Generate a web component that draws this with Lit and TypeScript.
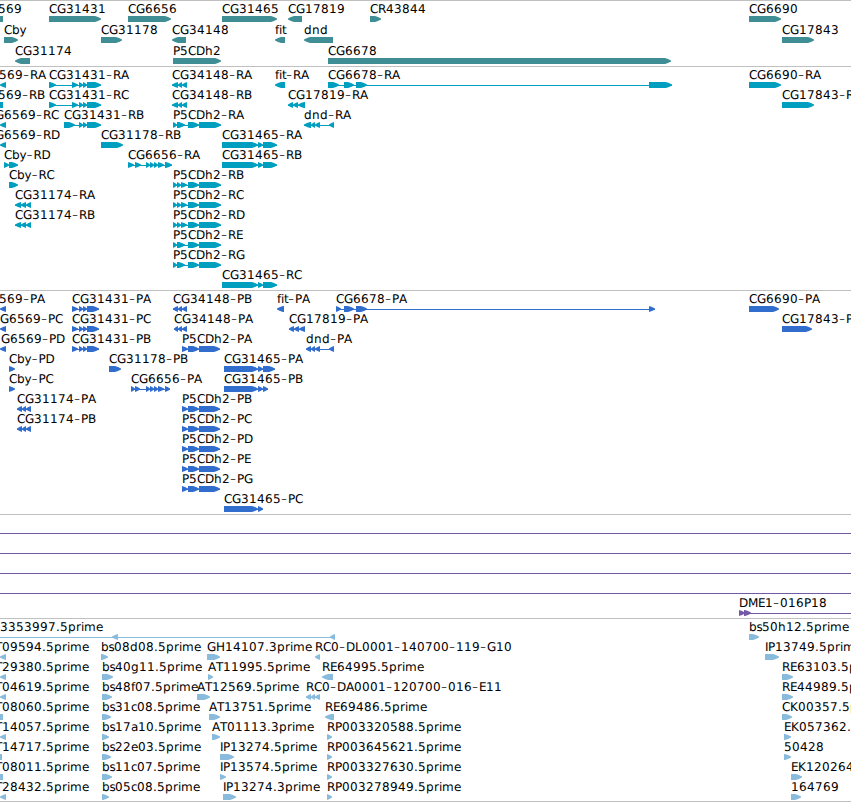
import { html, css, LitElement, svg } from 'lit';
import { customElement, property } from 'lit/decorators.js';

type Span = [number, number];

interface Feature {
  x: number;
  label: string;
  parts: Span[];
  reverse?: boolean;
  // start and end of the connecting line, when it is not given by the parts
  line?: Span;
}

interface Track {
  name: string;
  color: string;
  lineHeight: number;
  rows: Feature[][];
}

const fwd = (x: number, label: string, ...parts: Span[]): Feature => ({ x, label, parts });
const rev = (x: number, label: string, ...parts: Span[]): Feature => ({
  x,
  label,
  parts,
  reverse: true,
});

// advance of each character in px, anything missing is 8 wide
const ADVANCE: { [c: string]: number } = {
  G: 9, D: 9, H: 9, M: 10, B: 7, E: 7, P: 7, L: 7, T: 7, I: 3,
  a: 7, e: 7, g: 8, y: 7, i: 3, r: 5, s: 5.5, m: 12, f: 4, t: 4, c: 6, b: 7.5,
  '.': 4, '-': 7,
};

const p5cdh2Long: Span[] = [[173, 177], [177, 181], [181, 187], [188, 199], [199, 221]];
const p5cdh2Short: Span[] = [[173, 177], [177, 185], [188, 199], [199, 221]];
const p5cdh2Cds: Span[] = [[182, 188], [188, 199], [199, 220]];
const cg31465: Span[] = [[222, 258], [258, 263], [263, 277]];
const cg31431: Span[] = [[49, 56], [72, 78], [79, 83], [83, 87], [87, 101]];
const cg31431Cds: Span[] = [[72, 78], [79, 83], [83, 87], [87, 99]];
const clipped: Span = [0, 6];
const wholeLine = (): Feature => ({ x: 0, label: '', parts: [], line: [0, 851] });

const TRACKS: Track[] = [
  {
    name: 'genes',
    color: '#3f8e95',
    lineHeight: 21,
    rows: [
      [
        rev(-2, '569', [-8, 3]),
        fwd(49, 'CG31431', [49, 101]),
        fwd(128, 'CG6656', [128, 171]),
        fwd(222, 'CG31465', [222, 277]),
        rev(288, 'CG17819', [288, 302]),
        fwd(370, 'CR43844', [370, 381]),
        fwd(749, 'CG6690', [749, 781]),
      ],
      [
        fwd(4, 'Cby', [4, 18]),
        fwd(101, 'CG31178', [101, 122]),
        rev(172, 'CG34148', [172, 186]),
        rev(275, 'fit', [275, 285]),
        rev(304, 'dnd', [304, 333]),
        fwd(782, 'CG17843', [782, 814]),
      ],
      [
        rev(15, 'CG31174', [15, 30]),
        fwd(173, 'P5CDh2', [173, 221]),
        fwd(328, 'CG6678', [328, 671]),
      ],
    ],
  },
  {
    name: 'transcripts',
    color: '#009fc0',
    lineHeight: 20,
    rows: [
      [
        rev(-1, '569-RA', clipped),
        fwd(49, 'CG31431-RA', ...cg31431),
        rev(172, 'CG34148-RA', [172, 178], [178, 182], [182, 187]),
        rev(275, 'fit-RA', [275, 285]),
        fwd(328, 'CG6678-RA', [328, 339], [344, 354], [356, 367], [649, 672]),
        fwd(749, 'CG6690-RA', [749, 781]),
      ],
      [
        rev(-2, '569-RB', [-8, 3]),
        fwd(49, 'CG31431-RC', ...cg31431),
        rev(172, 'CG34148-RB', [172, 178], [178, 182], [182, 187]),
        rev(288, 'CG17819-RA', [288, 293], [293, 298], [298, 305]),
        fwd(782, 'CG17843-RA', [782, 814]),
      ],
      [
        rev(-5, 'G6569-RC', clipped),
        fwd(64, 'CG31431-RB', [64, 75], [79, 83], [83, 87], [87, 101]),
        fwd(173, 'P5CDh2-RA', ...p5cdh2Short),
        rev(304, 'dnd-RA', [304, 311], [311, 315], [315, 320], [329, 334]),
      ],
      [
        rev(-5, 'G6569-RD', clipped),
        fwd(101, 'CG31178-RB', [101, 123]),
        fwd(222, 'CG31465-RA', ...cg31465),
      ],
      [
        fwd(4, 'Cby-RD', [4, 9], [9, 18]),
        fwd(128, 'CG6656-RA', [128, 134], [135, 141], [146, 150], [150, 154], [154, 158], [158, 164], [165, 172]),
        fwd(222, 'CG31465-RB', ...cg31465),
      ],
      [fwd(9, 'Cby-RC', [9, 18]), fwd(173, 'P5CDh2-RB', ...p5cdh2Long)],
      [
        rev(15, 'CG31174-RA', [15, 21], [21, 26], [26, 31]),
        fwd(173, 'P5CDh2-RC', ...p5cdh2Long),
      ],
      [
        rev(15, 'CG31174-RB', [15, 21], [21, 26], [26, 31]),
        fwd(173, 'P5CDh2-RD', ...p5cdh2Long),
      ],
      [fwd(173, 'P5CDh2-RE', ...p5cdh2Short)],
      [fwd(173, 'P5CDh2-RG', ...p5cdh2Short)],
      [fwd(222, 'CG31465-RC', ...cg31465)],
    ],
  },
  {
    name: 'proteins',
    color: '#316dcc',
    lineHeight: 20,
    rows: [
      [
        rev(-1, '569-PA', clipped),
        fwd(72, 'CG31431-PA', ...cg31431Cds),
        rev(173, 'CG34148-PB', [173, 178], [178, 182], [182, 187]),
        rev(277, 'fit-PA', [277, 284]),
        fwd(336, 'CG6678-PA', [336, 341], [344, 354], [356, 367], [649, 655]),
        fwd(749, 'CG6690-PA', [749, 779]),
      ],
      [
        rev(0, 'G6569-PC', clipped),
        fwd(72, 'CG31431-PC', ...cg31431Cds),
        rev(174, 'CG34148-PA', [174, 178], [178, 182], [182, 187]),
        rev(289, 'CG17819-PA', [289, 294], [294, 299], [299, 305]),
        fwd(782, 'CG17843-PA', [782, 812]),
      ],
      [
        rev(1, 'G6569-PD', clipped),
        fwd(72, 'CG31431-PB', ...cg31431Cds),
        fwd(182, 'P5CDh2-PA', ...p5cdh2Cds),
        rev(306, 'dnd-PA', [306, 311], [311, 315], [315, 320], [329, 334]),
      ],
      [
        fwd(9, 'Cby-PD', [9, 15]),
        fwd(109, 'CG31178-PB', [109, 121]),
        fwd(224, 'CG31465-PA', [224, 258], [258, 263], [263, 275]),
      ],
      [
        fwd(9, 'Cby-PC', [9, 15]),
        fwd(131, 'CG6656-PA', [131, 135], [135, 140], [146, 150], [150, 154], [154, 158], [158, 164], [165, 170]),
        fwd(224, 'CG31465-PB', [224, 258], [258, 263], [263, 268]),
      ],
      [
        rev(17, 'CG31174-PA', [17, 22], [22, 26], [26, 31]),
        fwd(182, 'P5CDh2-PB', ...p5cdh2Cds),
      ],
      [
        rev(17, 'CG31174-PB', [17, 22], [22, 26], [26, 31]),
        fwd(182, 'P5CDh2-PC', ...p5cdh2Cds),
      ],
      [fwd(182, 'P5CDh2-PD', ...p5cdh2Cds)],
      [fwd(182, 'P5CDh2-PE', ...p5cdh2Cds)],
      [fwd(182, 'P5CDh2-PG', ...p5cdh2Cds)],
      [fwd(224, 'CG31465-PC', [224, 258], [258, 263])],
    ],
  },
  {
    name: 'clones',
    color: '#7459a6',
    lineHeight: 20,
    rows: [
      [wholeLine()],
      [wholeLine()],
      [wholeLine()],
      [wholeLine()],
      [{ ...fwd(739, 'DME1-016P18', [739, 745], [744, 751]), line: [739, 851] }],
    ],
  },
  {
    name: 'ests',
    color: '#88bbdc',
    lineHeight: 20,
    rows: [
      [
        { ...rev(0, '3353997.5prime', [112, 118], [330, 335]), line: [0, 335] },
        fwd(749, 'bs50h12.5prime', [749, 759]),
      ],
      [
        rev(-5, 'T09594.5prime', clipped),
        fwd(101, 'bs08d08.5prime', [101, 108]),
        fwd(207, 'GH14107.3prime', [207, 220]),
        rev(315, 'RC0-DL0001-140700-119-G10', [315, 320]),
        fwd(765, 'IP13749.5prime', [765, 779]),
      ],
      [
        rev(-5, 'T29380.5prime', clipped),
        fwd(102, 'bs40g11.5prime', [102, 113]),
        fwd(208, 'AT11995.5prime', [208, 213]),
        rev(322, 'RE64995.5prime', [322, 333]),
        fwd(782, 'RE63103.5prime', [782, 793]),
      ],
      [
        rev(-5, 'T04619.5prime', clipped),
        fwd(102, 'bs48f07.5prime', [102, 112]),
        fwd(197, 'AT12569.5prime', [197, 210]),
        rev(306, 'RC0-DA0001-120700-016-E11', [306, 311], [311, 315], [315, 320]),
        fwd(782, 'RE44989.5prime', [782, 793]),
      ],
      [
        rev(-5, 'T08060.5prime', [-8, 3]),
        fwd(102, 'bs31c08.5prime', [102, 111]),
        fwd(209, 'AT13751.5prime', [209, 220]),
        rev(325, 'RE69486.5prime', [325, 334]),
        fwd(782, 'CK00357.5prime', [782, 792]),
      ],
      [
        rev(-5, 'T14057.5prime', clipped),
        fwd(102, 'bs17a10.5prime', [102, 109]),
        fwd(212, 'AT01113.3prime', [212, 220]),
        fwd(327, 'RP003320588.5prime', [327, 332]),
        fwd(784, 'EK057362.5prime', [784, 791]),
      ],
      [
        rev(-5, 'T14717.5prime', [-8, 2]),
        fwd(102, 'bs22e03.5prime', [102, 111]),
        fwd(220, 'IP13274.5prime', [220, 234]),
        fwd(327, 'RP003645621.5prime', [327, 332]),
        fwd(784, '50428', [784, 791]),
      ],
      [
        rev(-5, 'T08011.5prime', [-8, 3]),
        fwd(102, 'bs11c07.5prime', [102, 112]),
        fwd(220, 'IP13574.5prime', [220, 226]),
        fwd(327, 'RP003327630.5prime', [327, 332]),
        fwd(791, 'EK120264.5prime', [791, 802]),
      ],
      [
        rev(-5, 'T28432.5prime', clipped),
        fwd(102, 'bs05c08.5prime', [102, 109]),
        fwd(223, 'IP13274.3prime', [223, 236]),
        fwd(327, 'RP003278949.5prime', [327, 332]),
        fwd(791, '164769', [791, 801]),
      ],
    ],
  },
];

@customElement('feature-track')
export class FeatureTrack extends LitElement {
  static styles = css`
    :host {
      display: block;
      box-sizing: border-box;
      overflow: hidden;
      border-top: 1px solid #c0c0c0;
    }

    .row {
      display: block;
      width: 100%;
      overflow: visible;
    }

    .label {
      font-family: 'DejaVu Sans', sans-serif;
      font-size: 12px;
      font-kerning: none;
      text-rendering: geometricPrecision;
      fill: #000;
    }

    .dash {
      font-family: 'DejaVu Sans Light', 'DejaVu Sans', sans-serif;
      font-size: 17px;
      font-weight: 200;
    }
  `;

  @property({ attribute: false })
  track!: Track;

  render() {
    return this.track.rows.map(
      row => html`
        <svg class="row" height=${this.track.lineHeight}>
          ${row.map(feature => this.renderFeature(feature))}
        </svg>
      `,
    );
  }

  private arrow([start, end]: Span, reverse = false) {
    const head = Math.min(end - start, 6);
    const tip = reverse ? start : end;
    const tail = reverse ? end : start;
    const neck = reverse ? start + head : end - head;
    const mid = (neck + tip) / 2;
    return `M${tail} 15 H${neck} L${mid} 16 L${tip} 17.6 V18.4 L${mid} 20 L${neck} 21 H${tail} Z`;
  }

  private renderFeature(feature: Feature) {
    const { parts, reverse } = feature;
    const line = feature.line ?? [parts[0][0], parts[parts.length - 1][1]];
    return svg`
      ${feature.line || parts.length > 1
        ? svg`<rect x=${line[0]} y="18" width=${line[1] - line[0]} height="1" fill=${this.track.color} />`
        : ''}
      ${parts.map(part => svg`<path d=${this.arrow(part, reverse)} fill=${this.track.color} />`)}
      ${this.renderLabel(feature)}
    `;
  }

  private renderLabel({ x, label }: Feature) {
    let pos = x;
    const xs: number[] = [];
    const ys: number[] = [];
    for (const c of label) {
      xs.push(pos);
      // the larger hyphen sits too high on the common baseline
      ys.push(c === '-' ? 13 : 12);
      pos += ADVANCE[c] ?? 8;
    }
    return svg`<text class="label" x=${xs.join(' ')} y=${ys.join(' ')}>${label
      .split(/(-)/)
      .map(c => (c === '-' ? svg`<tspan class="dash">-</tspan>` : c))}</text>`;
  }
}

@customElement('app-root')
export class GenomeView extends LitElement {
  static styles = css`
    :host {
      display: flex;
      flex-direction: column;
      height: 802px;
      overflow: hidden;
      background: #fff;
    }

    .genes {
      height: 66px;
    }

    .transcripts,
    .proteins {
      height: 224px;
    }

    .clones {
      height: 104px;
    }

    .ests {
      height: 184px;
      border-bottom: 1px solid #c0c0c0;
    }
  `;

  render() {
    return TRACKS.map(
      track => html`<feature-track class=${track.name} .track=${track}></feature-track>`,
    );
  }
}
